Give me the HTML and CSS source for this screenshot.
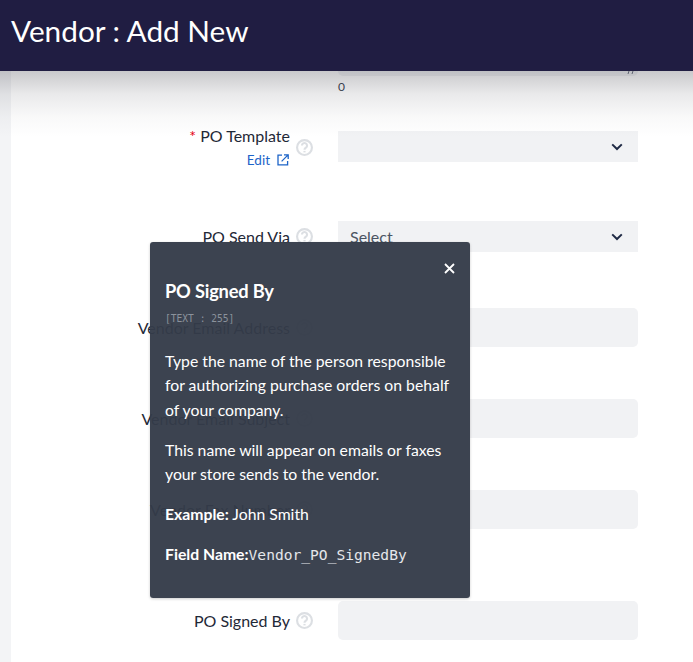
FILE: index.html
```html
<!DOCTYPE html>
<html lang="en">
<head>
<meta charset="utf-8">
<title>Vendor : Add New</title>
<link rel="stylesheet" href="styles.css">
</head>
<body>
<header class="topbar"><h1 class="topbar-title">Vendor : Add New</h1></header>
<div class="page">
  <div class="rail"></div>
  <main class="form">
    <div class="row row-counter">
      <div></div><div></div>
      <div class="field-stack">
        <div class="textarea">
          <svg class="grip" width="8" height="8" viewBox="0 0 8 8"><path d="M1 7 3 1M5 7 7 1" stroke="#6b7280" stroke-width="1" fill="none"/></svg>
        </div>
        <div class="counter">0</div>
      </div>
    </div>

    <div class="row row-template">
      <div class="label-block">
        <div class="label"><span class="req">*</span> PO Template</div>
        <a class="edit">Edit
          <svg width="12" height="12" viewBox="0 0 12 12" fill="none" stroke="#1d64c8" stroke-width="1.3"><path d="M5 1.2H1v9.6h9.6V7"/><path d="M4.6 7.4 10.6 1.4M7 .8h4.2V5"/></svg>
        </a>
      </div>
      <svg class="help" viewBox="0 0 16 16"><circle cx="8" cy="8" r="7"/><path d="M5.6 6.2a2.4 2.4 0 1 1 3.7 2c-.9.5-1.3 1-1.3 1.9"/><path d="M8 11.2v1.4"/></svg>
      <div class="select short select-template"><svg class="chev" width="12" height="8" viewBox="0 0 12 8"><path d="M1.2 1.4 6 6l4.8-4.6"/></svg></div>
    </div>

    <div class="row row-send">
      <div class="label">PO Send Via</div>
      <svg class="help" viewBox="0 0 16 16"><circle cx="8" cy="8" r="7"/><path d="M5.6 6.2a2.4 2.4 0 1 1 3.7 2c-.9.5-1.3 1-1.3 1.9"/><path d="M8 11.2v1.4"/></svg>
      <div class="select short">Select<svg class="chev" width="12" height="8" viewBox="0 0 12 8"><path d="M1.2 1.4 6 6l4.8-4.6"/></svg></div>
    </div>

    <div class="row row-email">
      <div class="label">Vendor Email Address</div>
      <svg class="help" viewBox="0 0 16 16"><circle cx="8" cy="8" r="7"/><path d="M5.6 6.2a2.4 2.4 0 1 1 3.7 2c-.9.5-1.3 1-1.3 1.9"/><path d="M8 11.2v1.4"/></svg>
      <div class="input"></div>
    </div>

    <div class="row row-next">
      <div class="label">Vendor Email Subject</div>
      <svg class="help" viewBox="0 0 16 16"><circle cx="8" cy="8" r="7"/><path d="M5.6 6.2a2.4 2.4 0 1 1 3.7 2c-.9.5-1.3 1-1.3 1.9"/><path d="M8 11.2v1.4"/></svg>
      <div class="input"></div>
    </div>

    <div class="row row-next">
      <div class="label">Vendor Fax Number</div>
      <svg class="help" viewBox="0 0 16 16"><circle cx="8" cy="8" r="7"/><path d="M5.6 6.2a2.4 2.4 0 1 1 3.7 2c-.9.5-1.3 1-1.3 1.9"/><path d="M8 11.2v1.4"/></svg>
      <div class="input"></div>
    </div>

    <div class="row row-signed">
      <div class="label">PO Signed By</div>
      <svg class="help" viewBox="0 0 16 16"><circle cx="8" cy="8" r="7"/><path d="M5.6 6.2a2.4 2.4 0 1 1 3.7 2c-.9.5-1.3 1-1.3 1.9"/><path d="M8 11.2v1.4"/></svg>
      <div class="input"></div>
    </div>
  </main>
</div>

<aside class="tip">
  <svg class="tip-close" width="11" height="11" viewBox="0 0 11 11"><path d="M1 1 10 10M10 1 1 10"/></svg>
  <h2 class="tip-title">PO Signed By</h2>
  <div class="tip-type">[TEXT : 255]</div>
  <p class="tip-text">Type the name of the person responsible for authorizing purchase orders on behalf of your company.</p>
  <p class="tip-text">This name will appear on emails or faxes your store sends to the vendor.</p>
  <p class="tip-text tip-example"><strong>Example:</strong> John Smith</p>
  <p class="tip-text tip-field"><strong>Field Name:</strong><code class="tip-code">Vendor_PO_SignedBy</code></p>
</aside>
</body>
</html>
```
FILE: styles.css
```css
* { box-sizing: border-box; }
html, body { margin: 0; height: 100%; }
body {
  position: relative;
  height: 662px;
  overflow: hidden;
  background: #fff;
  color: #1f2937;
  font-family: Lato, sans-serif;
  font-size: 16px;
}
.topbar {
  position: absolute;
  z-index: 2;
  top: 0;
  left: 0;
  right: 0;
  height: 71px;
  padding: 11px 11px 0;
  background: #201d42;
}
.topbar::after {
  content: "";
  position: absolute;
  top: 100%;
  left: 0;
  right: 0;
  height: 66px;
  background: linear-gradient(to bottom, rgba(60,60,70,.28), rgba(60,60,70,.11) 35%, rgba(60,60,70,.03) 70%, rgba(60,60,70,0));
}
.topbar-title {
  margin: 0;
  color: #fff;
  font-size: 29.75px;
  font-weight: 400;
  line-height: 40px;
}
.page { display: flex; height: 100%; }
.rail { width: 11px; flex: none; background: #f3f4f6; }
.form { flex: 1; padding-right: 55px; }
.row {
  display: grid;
  grid-template-columns: 279px 48px 300px;
  align-items: center;
}
.row-counter { height: 127px; align-items: start; }
.row-template { align-items: start; height: 40px; }
.row-send { margin-top: 54px; }
.row-email { margin-top: 56px; }
.row-next { margin-top: 52px; }
.row-signed { margin-top: 72px; }
.field-stack { display: flex; flex-direction: column; }
.textarea {
  height: 76px;
  display: flex;
  justify-content: flex-end;
  align-items: flex-end;
  padding: 0 3px 1px 0;
  background: #f1f2f4;
  border-radius: 5px;
}
.counter {
  margin-top: 3px;
  color: #374151;
  font-size: 12px;
  line-height: 15px;
}
.label-block { display: flex; flex-direction: column; align-items: flex-end; }
.label { text-align: right; color: #1f2937; line-height: 20px; white-space: nowrap; }
.row-template .label { margin-top: -1px; }
.req { color: #e60012; }
.edit {
  display: flex;
  align-items: center;
  gap: 7px;
  margin-top: 6px;
  padding-right: 1px;
  color: #1d64c8;
  font-size: 13.5px;
  line-height: 16px;
}
.help {
  width: 17px;
  height: 17px;
  margin-left: 6px;
  fill: none;
  stroke: #dcdfe3;
  stroke-width: 2;
}
.row-template .help { margin-top: 12px; }
.select, .input { background: #f1f2f4; }
.select {
  display: flex;
  align-items: center;
  justify-content: space-between;
  height: 31px;
  padding: 0 15px 0 12px;
  color: #4b5563;
  font-size: 16px;
}
.select-template { justify-content: flex-end; margin-top: 4px; }
.chev { fill: none; stroke: #1f2a44; stroke-width: 2; }
.input { height: 39px; border-radius: 5px; }
.tip {
  position: absolute;
  z-index: 3;
  top: 242px;
  left: 150px;
  width: 320px;
  height: 356px;
  padding: 36px 15px 0;
  border-radius: 3px;
  background: rgba(52,59,73,.96);
  box-shadow: 0 1px 3px rgba(0,0,0,.2);
  color: #fff;
}
.tip-close {
  position: absolute;
  top: 21px;
  right: 15px;
  fill: none;
  stroke: #fff;
  stroke-width: 1.8;
}
.tip-title {
  margin: 0;
  font-size: 18.3px;
  font-weight: 700;
  line-height: 26px;
  letter-spacing: -.2px;
}
.tip-type {
  margin-top: 9px;
  color: #8b929c;
  font-family: "DejaVu Sans Mono", monospace;
  font-size: 9.6px;
  line-height: 12px;
}
.tip-text {
  margin: 24px 0 0;
  font-size: 15.75px;
  line-height: 24.4px;
}
.tip-text + .tip-text { margin-top: 15.4px; }
.tip-code {
  color: #e5e7eb;
  font-family: "DejaVu Sans Mono", monospace;
  font-size: 14.6px;
}
```
